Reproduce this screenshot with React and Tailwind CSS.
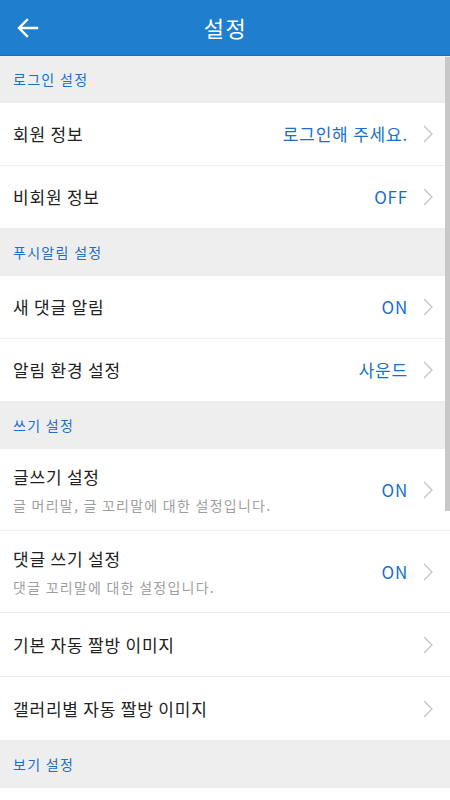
import React from 'react';

const sections = [
  {
    title: '로그인 설정',
    rows: [
      { label: '회원 정보', value: '로그인해 주세요.' },
      { label: '비회원 정보', value: 'OFF' },
    ],
  },
  {
    title: '푸시알림 설정',
    rows: [
      { label: '새 댓글 알림', value: 'ON' },
      { label: '알림 환경 설정', value: '사운드' },
    ],
  },
  {
    title: '쓰기 설정',
    rows: [
      { label: '글쓰기 설정', sub: '글 머리말, 글 꼬리말에 대한 설정입니다.', value: 'ON' },
      { label: '댓글 쓰기 설정', sub: '댓글 꼬리말에 대한 설정입니다.', value: 'ON' },
      { label: '기본 자동 짤방 이미지', tall: true },
      { label: '갤러리별 자동 짤방 이미지', tall: true },
    ],
  },
  { title: '보기 설정', rows: [] },
];

function Chevron() {
  return (
    <svg width="10" height="18" viewBox="0 0 10 18" className="shrink-0">
      <path d="M1 1 L9 9 L1 17" fill="none" stroke="#c4c4c4" strokeWidth="1.3" />
    </svg>
  );
}

function Row({ label, sub, value, tall }) {
  const h = sub ? 'h-[82px]' : tall ? 'h-[64px]' : 'h-[63px]';
  return (
    <div className={`flex items-center bg-white border-b border-[#eeeeee] pl-[13px] pr-[17px] ${h}`}>
      <div className="flex-1 min-w-0">
        <div className="text-[17px] tracking-[0.8px] text-[#212121] leading-[22px]">{label}</div>
        {sub && <div className="text-[14px] tracking-[1.25px] text-[#9e9e9e] leading-[18px] mt-[8px]">{sub}</div>}
      </div>
      {value && <span className="text-[17px] tracking-[0.8px] text-[#1a6fca] mr-[15px]">{value}</span>}
      <Chevron />
    </div>
  );
}

export default function App() {
  return (
    <div className="relative w-[450px] h-[800px] overflow-hidden bg-white" style={{ fontFamily: '"Noto Sans CJK KR", "Noto Sans", sans-serif' }}>
      {/* top bar */}
      <div className="relative h-[56px] bg-[#1f7ecd] border-b border-[#1a6fbb] flex items-center justify-center">
        <svg width="22" height="20" viewBox="0 0 22 20" className="absolute left-[17px] top-[18px]">
          <path d="M20 10 H3 M10 2 L2 10 L10 18" fill="none" stroke="white" strokeWidth="2.4" strokeLinecap="square" />
        </svg>
        <span className="text-white text-[22px] tracking-[1.5px] pl-[1px]">설정</span>
      </div>

      {sections.map((s) => (
        <div key={s.title}>
          <div className="h-[47px] bg-[#eeeeee] flex items-center pl-[13px] text-[14px] tracking-[1.3px] text-[#1a6fca]">{s.title}</div>
          {s.rows.map((r) => (
            <Row key={r.label} {...r} />
          ))}
        </div>
      ))}

      {/* scrollbar */}
      <div className="absolute right-0 top-[57px] w-[5px] h-[454px] bg-[#c8c8c8]" />
    </div>
  );
}
